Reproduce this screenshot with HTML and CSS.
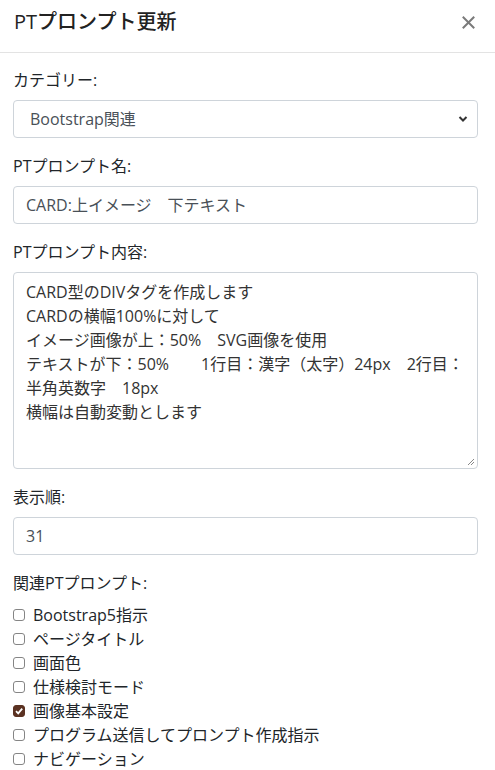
FILE: index.html
```html
<!DOCTYPE html>
<html lang="ja">
<head>
<meta charset="utf-8">
<title>PTプロンプト更新</title>
<link rel="stylesheet" href="styles.css">
</head>
<body>
<div class="modal">
  <div class="modal-header">
    <h5 class="modal-title">PTプロンプト更新</h5>
    <button class="close" type="button" aria-label="Close">
      <svg width="13" height="13" viewBox="0 0 13 13"><path d="M1.5 1.5L11.5 11.5M11.5 1.5L1.5 11.5" stroke="#7a7a7a" stroke-width="2" stroke-linecap="square"/></svg>
    </button>
  </div>
  <div class="modal-body">
    <div class="form-group">
      <label class="label">カテゴリー:</label>
      <div class="select">
        <span>Bootstrap関連</span>
        <svg width="10" height="8" viewBox="0 0 10 8"><path d="M1.5 2L5 5.5L8.5 2" stroke="#333" stroke-width="2" fill="none"/></svg>
      </div>
    </div>
    <div class="form-group">
      <label class="label">PTプロンプト名:</label>
      <div class="input">CARD:上イメージ　下テキスト</div>
    </div>
    <div class="form-group">
      <label class="label">PTプロンプト内容:</label>
      <div class="textarea"><div class="line">CARD型のDIVタグを作成します</div><div class="line">CARDの横幅100%に対して</div><div class="line">イメージ画像が上：50%　SVG画像を使用</div><div class="line">テキストが下：50%　　1行目：漢字（太字）24px　2行目：</div><div class="line">半角英数字　18px</div><div class="line">横幅は自動変動とします</div><svg class="grip" width="8" height="8" viewBox="0 0 8 8"><path d="M7 1L1 7M7 4L4 7" stroke="#888" stroke-width="1"/></svg></div>
    </div>
    <div class="form-group">
      <label class="label">表示順:</label>
      <div class="input">31</div>
    </div>
    <div class="form-group">
      <label class="label">関連PTプロンプト:</label>
      <ul class="checks">
        <li><span class="box"></span>Bootstrap5指示</li>
        <li><span class="box"></span>ページタイトル</li>
        <li><span class="box"></span>画面色</li>
        <li><span class="box"></span>仕様検討モード</li>
        <li><span class="box checked"><svg width="10" height="10" viewBox="0 0 10 10"><path d="M2 5.2L4.2 7.4L8.2 2.6" stroke="#fff" stroke-width="1.8" fill="none"/></svg></span>画像基本設定</li>
        <li><span class="box"></span>プログラム送信してプロンプト作成指示</li>
        <li><span class="box"></span>ナビゲーション</li>
      </ul>
    </div>
  </div>
</div>
</body>
</html>
```

FILE: styles.css
```css
* { box-sizing: border-box; }
html, body { margin: 0; padding: 0; background: #fff; }
body {
  font-family: "Open Sans", "Noto Sans CJK JP", sans-serif;
  font-size: 16px;
  line-height: 24px;
  color: #212529;
  overflow: hidden;
}
.modal { width: 495px; }
.modal-header {
  display: flex;
  align-items: center;
  justify-content: space-between;
  height: 53px;
  padding: 0 18px 8px 14px;
  border-bottom: 1px solid #e3e3e3;
}
.modal-title {
  margin: 0;
  font-size: 20px;
  line-height: 30px;
  font-weight: 500;
  color: #222;
}
.close {
  border: 0;
  background: none;
  padding: 0;
  margin: 0 2px 0 0;
  display: flex;
}
.modal-body { padding: 15px 17px 0 13px; }
.form-group { margin-bottom: 16px; }
.label { display: block; margin-bottom: 8px; }
.select, .input, .textarea {
  border: 1px solid #ced4da;
  border-radius: 4px;
  color: #495057;
  padding: 6px 12px;
  line-height: 24px;
}
.select {
  height: 38px;
  display: flex;
  align-items: center;
  justify-content: space-between;
  padding: 6px 9px 6px 16px;
}
.input { height: 38px; }
.textarea {
  position: relative;
  height: 197px;
  padding-top: 7px;
  color: #333;
}
.grip { position: absolute; right: 2px; bottom: 2px; }
.checks { list-style: none; margin: 0; padding: 0; }
.checks li { display: flex; align-items: center; height: 24px; }
.box {
  width: 12px;
  height: 12px;
  border: 1px solid #858585;
  border-radius: 3px;
  margin-right: 8px;
  display: flex;
  align-items: center;
  justify-content: center;
  flex: none;
}
.box.checked { background: #5b3222; border-color: #5b3222; }
```
